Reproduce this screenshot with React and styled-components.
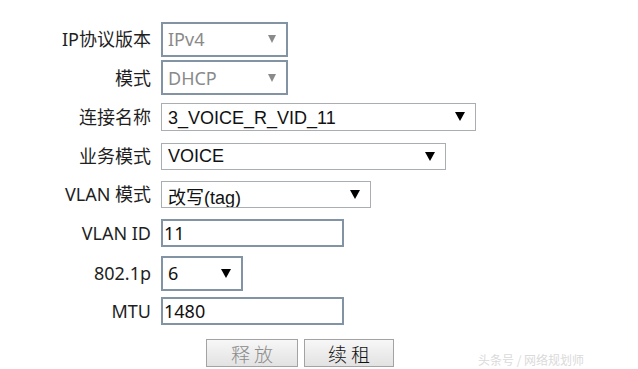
import React from "react";
import styled, { createGlobalStyle } from "styled-components";

const Global = createGlobalStyle`
  html, body { margin: 0; padding: 0; background: #fff; }
  body { width: 638px; height: 369px; overflow: hidden; position: relative;
    font-family: "Noto Sans", "Noto Sans CJK SC", sans-serif; }
`;

const Form = styled.div`
  display: grid;
  grid-template-columns: 151px auto;
  grid-template-rows: 38px 39px 39px 40px 36px 41px 40px 35px 50px;
  column-gap: 10px;
  padding-top: 20px;
`;

const Label = styled.div`
  display: flex;
  align-items: center;
  justify-content: flex-end;
  font-size: 18px;
  color: #1f1f1f;
  white-space: nowrap;
  line-height: 1;
`;

const Cell = styled.div`
  display: flex;
  align-items: center;
`;

const SelectBox = styled.div`
  box-sizing: border-box;
  width: ${(p) => p.$w}px;
  height: ${(p) => p.$h}px;
  border: ${(p) => (p.$thick ? "2px solid #8293a3" : "1px solid #a9aeb3")};
  background: #fff;
  display: flex;
  align-items: center;
  justify-content: space-between;
  padding: 0 10px 0 ${(p) => (p.$thick ? 5 : 6)}px;
  overflow: hidden;
  font-family: ${(p) =>
    p.$arial
      ? '"Liberation Sans", "Noto Sans CJK SC", sans-serif'
      : '"Noto Sans", "Noto Sans CJK SC", sans-serif'};
  font-size: 18px;
  line-height: 1;
  color: ${(p) => (p.$disabled ? "#8a8a8a" : "#111")};
`;

const Value = styled.span`
  white-space: nowrap;
  position: relative;
  top: ${(p) => p.$dy || 0}px;
`;

const Arrow = styled.span`
  width: 0;
  height: 0;
  border-left: ${(p) => (p.$small ? 4.5 : 5)}px solid transparent;
  border-right: ${(p) => (p.$small ? 4.5 : 5)}px solid transparent;
  border-top: ${(p) => (p.$small ? 8 : 9)}px solid ${(p) => (p.$disabled ? "#8a8a8a" : "#000")};
  flex: none;
`;

const TextInput = styled.div`
  box-sizing: border-box;
  width: ${(p) => p.$w}px;
  height: 28px;
  border: 2px solid #8293a3;
  background: #fff;
  display: flex;
  align-items: center;
  padding-left: 1px;
  font-size: 18px;
  line-height: 1;
  color: #111;
`;

const Buttons = styled.div`
  display: flex;
  align-items: center;
  gap: 6px;
  padding-left: 45px;
`;

const Button = styled.div`
  box-sizing: border-box;
  width: ${(p) => p.$w}px;
  height: 28px;
  border: 1px solid #a3a3a3;
  background: linear-gradient(#f7f7f7, #e2e2e2);
  display: flex;
  align-items: center;
  justify-content: center;
  font-family: "Noto Sans CJK SC", sans-serif;
  font-size: 19px;
  font-weight: 300;
  letter-spacing: 4px;
  padding-left: 4px;
  color: ${(p) => (p.$disabled ? "#8c8c8c" : "#111")};
`;

const Watermark = styled.div`
  position: absolute;
  left: 478px;
  top: 353px;
  font-family: "Noto Sans CJK SC", sans-serif;
  font-size: 12px;
  line-height: 14px;
  color: #dadada;
  white-space: nowrap;
`;

function Select({ w, h, thick, disabled, arial, value, dy, small }) {
  return (
    <SelectBox $w={w} $h={h} $thick={thick} $disabled={disabled} $arial={arial}>
      <Value $dy={dy}>{value}</Value>
      <Arrow $disabled={disabled} $small={small} />
    </SelectBox>
  );
}

export default function App() {
  return (
    <>
      <Global />
      <Form>
        <Label>IP协议版本</Label>
        <Cell>
          <Select w={127} h={35} thick disabled value="IPv4" small />
        </Cell>
        <Label>模式</Label>
        <Cell>
          <Select w={127} h={35} thick disabled value="DHCP" small />
        </Cell>
        <Label>连接名称</Label>
        <Cell>
          <Select w={315} h={28} arial value="3_VOICE_R_VID_11" dy={1} />
        </Cell>
        <Label>业务模式</Label>
        <Cell>
          <Select w={285} h={27} arial value="VOICE" dy={0} />
        </Cell>
        <Label>VLAN 模式</Label>
        <Cell>
          <Select w={210} h={27} arial value="改写(tag)" dy={4} />
        </Cell>
        <Label>VLAN ID</Label>
        <Cell>
          <TextInput $w={183}>11</TextInput>
        </Cell>
        <Label>802.1p</Label>
        <Cell>
          <Select w={82} h={35} thick value="6" />
        </Cell>
        <Label>MTU</Label>
        <Cell>
          <TextInput $w={183}>1480</TextInput>
        </Cell>
        <div />
        <Buttons>
          <Button $w={92} $disabled>释放</Button>
          <Button $w={90}>续租</Button>
        </Buttons>
      </Form>
      <Watermark>头条号 / 网络规划师</Watermark>
    </>
  );
}
